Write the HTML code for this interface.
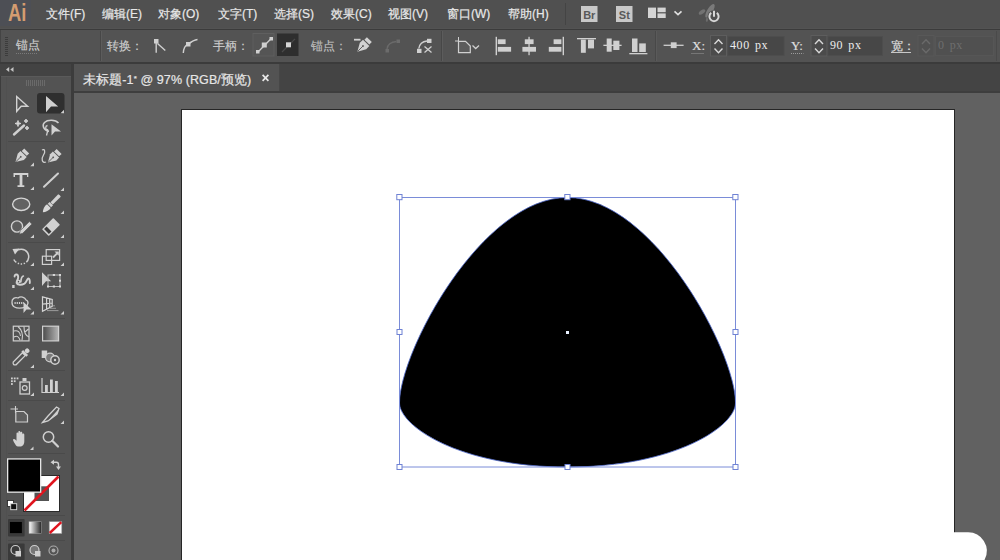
<!DOCTYPE html>
<html><head><meta charset="utf-8">
<style>
*{margin:0;padding:0;box-sizing:border-box}
html,body{width:1000px;height:560px;overflow:hidden;background:#535353;font-family:"Liberation Sans",sans-serif;color:#e6e6e6}
.a{position:absolute}
#menubar{left:0;top:0;width:1000px;height:28px;background:#505050}
.mi{position:absolute;top:5px;font-size:12px;line-height:18px;color:#e8e8e8;white-space:nowrap;-webkit-text-stroke:0.2px #e8e8e8}
#ctrl{left:0;top:29px;width:1000px;height:35px;background:#535353;border-top:1px solid #3b3b3b;border-bottom:2px solid #3b3b3b}
.inp{position:absolute;font-family:"Liberation Serif",serif;font-size:12px;line-height:14px;color:#ececec;white-space:nowrap;letter-spacing:0.6px;word-spacing:1.5px}
.lbl{position:absolute;font-size:12px;line-height:14px;color:#cdcdcd;white-space:nowrap;-webkit-text-stroke:0.15px currentColor}
#toolhdr{left:0;top:64px;width:71px;height:12px;background:#434343}
#toolbody{left:0;top:76px;width:71px;height:484px;background:#535353;border-top:1px solid #5a5a5a}
#gap{left:71px;top:64px;width:3px;height:496px;background:#3c3c3c}
#tabstrip{left:74px;top:64px;width:926px;height:28px;background:#444444}
#tab{left:74px;top:64px;width:206px;height:27px;background:#535353;border-right:1px solid #474747}
#canvas{left:74px;top:91px;width:926px;height:469px;background:#616161;border-top:2px solid #3e3e3e}
#artboard{left:181px;top:109px;width:774px;height:460px;background:#fff;border:1px solid #262626}
</style></head><body>
<div id="menubar" class="a">
  <div class="a" style="left:0;top:0;width:31px;height:26px;background:#4d4f55"></div>
  <div class="a" style="left:7.5px;top:1px;font-size:23px;line-height:24px;color:#d49c70;font-weight:bold;letter-spacing:0px;transform:scaleX(0.8);transform-origin:0 0">Ai</div>
  <div class="mi" style="left:46px">文件(F)</div>
  <div class="mi" style="left:102px">编辑(E)</div>
  <div class="mi" style="left:158px">对象(O)</div>
  <div class="mi" style="left:218px">文字(T)</div>
  <div class="mi" style="left:274px">选择(S)</div>
  <div class="mi" style="left:331px">效果(C)</div>
  <div class="mi" style="left:388px">视图(V)</div>
  <div class="mi" style="left:447px">窗口(W)</div>
  <div class="mi" style="left:508px">帮助(H)</div>
  <div class="a" style="left:565px;top:3px;width:1px;height:22px;background:#444"></div>
  <svg class="a" style="left:560px;top:0" width="180" height="28" viewBox="560 0 180 28">
    <rect x="581" y="6" width="16.5" height="16" fill="#c8c8c8"/>
    <rect x="616" y="6" width="16.5" height="16" fill="#c8c8c8"/>
    <text x="589.3" y="18.6" font-family="Liberation Sans" font-weight="bold" font-size="11" fill="#595959" text-anchor="middle">Br</text>
    <text x="624.3" y="18.6" font-family="Liberation Sans" font-weight="bold" font-size="11" fill="#595959" text-anchor="middle">St</text>
    <rect x="648" y="7.6" width="8" height="10.4" fill="#d4d4d4"/>
    <rect x="657.5" y="7.6" width="8.2" height="4.6" fill="#d4d4d4"/>
    <rect x="657.5" y="13.4" width="8.2" height="4.6" fill="#d4d4d4"/>
    <path d="M674.5,11.3 L678,14.6 L681.5,11.3" fill="none" stroke="#e0e0e0" stroke-width="1.6"/>
    <ellipse cx="710" cy="10.8" rx="7.8" ry="2.7" transform="rotate(-58 710 10.8)" fill="#7a7a7a"/>
    <ellipse cx="702" cy="12" rx="3.8" ry="1.8" transform="rotate(-38 702 12)" fill="#727272"/>
    <ellipse cx="707" cy="19.5" rx="2.4" ry="1.1" transform="rotate(-80 707 19.5)" fill="#6c6c6c"/>
    <circle cx="714" cy="16.8" r="6.6" fill="#505050"/>
    <path d="M711.2,12.9 A4.6,4.6 0 1 0 716.8,12.9" fill="none" stroke="#d6d6d6" stroke-width="2"/>
    <path d="M714,10.8 V16.8" stroke="#d6d6d6" stroke-width="2"/>
  </svg>
</div>
<div id="ctrl" class="a"></div>
<svg class="a" style="left:0;top:0" width="1000" height="64" viewBox="0 0 1000 64">
<g stroke="#3c3c3c" stroke-width="1"><path d="M5,37.5 H8 M5,39.5 H8 M5,41.5 H8 M5,43.5 H8 M5,45.5 H8 M5,47.5 H8 M5,49.5 H8 M5,51.5 H8 M5,53.5 H8 M5,55.5 H8"/></g>
<path d="M0.5,30 V62" stroke="#444"/>
<path d="M16,53.5 H38" stroke="#7a7a7a" stroke-dasharray="1 1"/>
<path d="M100.5,31 V61" stroke="#474747"/><path d="M101.5,31 V61" stroke="#5c5c5c"/>
<path d="M441.5,31 V61" stroke="#474747"/><path d="M442.5,31 V61" stroke="#5c5c5c"/>
<path d="M655.5,31 V61" stroke="#484848"/><path d="M656.5,31 V61" stroke="#5a5a5a"/>
<!-- convert corner -->
<g fill="#d0d0d0" stroke="#d0d0d0">
<rect x="154" y="39" width="4.5" height="4.5" stroke="none"/>
<path d="M156.2,43 V52.8" stroke-width="1.4" fill="none"/>
<path d="M157.5,43.5 L165.3,50.5" stroke-width="1.4" fill="none"/>
</g>
<!-- convert smooth -->
<rect x="186" y="42" width="4.5" height="4.5" fill="#d0d0d0"/>
<path d="M183.3,53 C183.5,48.5 185,45.5 188,44.3 C191,42 193.5,40 197.5,39.5" fill="none" stroke="#d0d0d0" stroke-width="1.4"/>
<!-- handle btns -->
<rect x="253" y="33.5" width="21" height="22.5" fill="#555" stroke="#5f5f5f" stroke-width="1"/>
<path d="M258,52 L271,38.8" stroke="#d0d0d0" stroke-width="1.3"/>
<rect x="256" y="50" width="3.5" height="3.5" fill="#d0d0d0"/>
<rect x="269.5" y="37" width="3.5" height="3.5" fill="#d0d0d0"/>
<rect x="261.8" y="42.5" width="5" height="5" fill="#d0d0d0"/>
<rect x="277" y="33.5" width="21.5" height="22.5" fill="#2e2e2e"/>
<path d="M282,52 L295,38.8" stroke="#4a4a4a" stroke-width="1.2"/>
<rect x="286" y="42.3" width="5" height="5" fill="#d4d4d4"/>
<!-- pen minus -->
<rect x="354" y="38.8" width="6.5" height="1.8" fill="#d0d0d0"/>
<g transform="translate(363,46) rotate(45)">
<path d="M-3.5,-9 H3.5 V-5.5 H-3.5 Z" fill="#d2d2d2"/>
<path d="M-4.5,-4.5 H4.5 V0 L0,8 L-4.5,0 Z" fill="#d2d2d2"/>
<path d="M0,0 V7.5" stroke="#5a5a5a" stroke-width="0.9"/>
<circle cx="0" cy="0" r="0.9" fill="#5a5a5a"/>
</g>
<!-- dim curve -->
<rect x="385.5" y="49" width="3.5" height="3.5" fill="#6c6c6c"/>
<rect x="396.5" y="39.5" width="3.5" height="3.5" fill="#6c6c6c"/>
<path d="M387,49 C387.5,45 390.5,42 396.5,41.5" fill="none" stroke="#6a6a6a" stroke-width="1.3"/>
<!-- cut path -->
<rect x="417" y="48.8" width="4.5" height="4.2" fill="#d0d0d0"/>
<rect x="427" y="38.8" width="4.5" height="4.2" fill="#d0d0d0"/>
<path d="M418.8,48.5 C419.5,44 422.5,41.5 427,41" fill="none" stroke="#d0d0d0" stroke-width="1.4"/>
<path d="M424.5,46.5 L431.5,52.5 M424.5,52.5 L431.5,46.5" stroke="#d0d0d0" stroke-width="1.3"/>
<!-- transform -->
<path d="M458.5,37 V41 M455,41 H458.5" stroke="#cfcfcf" stroke-width="1"/>
<path d="M458.5,41.3 H465.5 L470.3,46 V52.6 H458.5 Z" fill="#5c5c5c" stroke="#d0d0d0" stroke-width="1.2"/>
<path d="M472.5,45.5 L475.7,48.5 L479,45.5" fill="none" stroke="#cfcfcf" stroke-width="1.3"/>
<!-- align -->
<g fill="#d0d0d0">
<rect x="495.6" y="36.8" width="1.4" height="18.4"/>
<rect x="497.8" y="39.3" width="7.8" height="4.8"/>
<rect x="497.8" y="46.9" width="13.3" height="4.8"/>
<rect x="528.4" y="36.8" width="1.3" height="18.4"/>
<rect x="524.8" y="39.3" width="8.8" height="4.8"/>
<rect x="522.4" y="46.9" width="13.6" height="4.8"/>
<rect x="562.6" y="36.8" width="1.4" height="18.4"/>
<rect x="553.6" y="39.3" width="7.8" height="4.8"/>
<rect x="548.8" y="46.9" width="12.6" height="4.8"/>
<rect x="577" y="38" width="19" height="1.3"/>
<rect x="580.9" y="39.6" width="4.9" height="13.2"/>
<rect x="588" y="39.6" width="6" height="8.8"/>
<rect x="603.4" y="44.7" width="18.2" height="1.3"/>
<rect x="606.7" y="38.5" width="5" height="13.2"/>
<rect x="613.3" y="40.7" width="6.1" height="9.3"/>
<rect x="629.3" y="53" width="18.1" height="1.3"/>
<rect x="632" y="38.5" width="5.5" height="13.5"/>
<rect x="639.2" y="43.4" width="6.6" height="8.6"/>
</g>
<!-- ref point -->
<path d="M663.6,45.3 H683.6" stroke="#cfcfcf" stroke-width="1.3"/>
<rect x="670.8" y="42.3" width="5.8" height="5.8" fill="#cfcfcf"/>
<!-- underlines for X Y W -->
<path d="M691.5,53.5 H704 M791,53.5 H803.5" stroke="#9a9a9a" stroke-dasharray="1 1"/>
<path d="M891,52.5 H911" stroke="#c8c8c8" stroke-width="1"/>
<!-- spinners -->
<rect x="710.5" y="35.5" width="16" height="20.5" fill="#4b4b4b" stroke="#5d5d5d" stroke-width="1"/>
<path d="M714.5,44 L718.5,39.8 L722.5,44 M714.5,48.5 L718.5,52.7 L722.5,48.5" fill="none" stroke="#d8d8d8" stroke-width="1.4"/>
<rect x="728" y="36.5" width="56" height="19" fill="#474747" stroke="#4d4d4d" stroke-width="1"/>
<rect x="811" y="35.5" width="16" height="20.5" fill="#4b4b4b" stroke="#5d5d5d" stroke-width="1"/>
<path d="M815,44 L819,39.8 L823,44 M815,48.5 L819,52.7 L823,48.5" fill="none" stroke="#d8d8d8" stroke-width="1.4"/>
<rect x="828" y="36.5" width="54.5" height="19" fill="#474747" stroke="#4d4d4d" stroke-width="1"/>
<rect x="918" y="35.5" width="16" height="20.5" fill="#515151" stroke="#585858" stroke-width="1"/>
<path d="M922,44 L926,39.8 L930,44 M922,48.5 L926,52.7 L930,48.5" fill="none" stroke="#6a6a6a" stroke-width="1.4"/>
<rect x="935.5" y="36.5" width="58" height="19" fill="#505050" stroke="#565656" stroke-width="1"/>
<path d="M996.5,31 V61" stroke="#4a4a4a"/>
</svg>

<div class="a" style="left:0;top:0;width:1000px;height:64px">
  <div class="lbl" style="left:16px;top:38px">锚点</div>
  <div class="lbl" style="left:107px;top:39px">转换：</div>
  <div class="lbl" style="left:213px;top:39px">手柄：</div>
  <div class="lbl" style="left:311px;top:39px;color:#bebebe">锚点：</div>
  <div class="lbl" style="left:692px;top:39px;font-family:'Liberation Serif',serif;font-size:13px;color:#e0e0e0">X:</div>
  <div class="lbl" style="left:791px;top:39px;font-family:'Liberation Serif',serif;font-size:13px;color:#e0e0e0">Y:</div>
  <div class="lbl" style="left:891px;top:39px;color:#e0e0e0">宽：</div>
  <div class="inp" style="left:730px;top:38px">400 px</div>
  <div class="inp" style="left:830px;top:38px">90 px</div>
  <div class="inp" style="left:938px;top:38px;color:#6e6e6e">0 px</div>
</div>
<div id="toolhdr" class="a"></div>
<div id="toolbody" class="a"></div>
<div id="gap" class="a"></div>
<div id="tabstrip" class="a"></div>
<div id="tab" class="a">
  <div class="a" style="left:9px;top:8px;font-size:12.5px;line-height:14px;color:#e6e6e6;white-space:nowrap;letter-spacing:0.1px;-webkit-text-stroke:0.2px #e6e6e6">未标题-1<span style="font-size:8px;vertical-align:3px">*</span> @ 97% (RGB/预览)</div>
  <svg class="a" style="left:185px;top:7px" width="14" height="14" viewBox="0 0 14 14"><path d="M3.6,3.8 L9.4,9.8 M9.4,3.8 L3.6,9.8" stroke="#e8e8e8" stroke-width="1.7"/></svg>
</div>
<svg class="a" style="left:0;top:0" width="71" height="560" viewBox="0 0 71 560">
<g fill="none" stroke-width="1"><path d="M0.5,76 V560" stroke="#3d3d3d"/><path d="M6.5,77 V560" stroke="#505050"/></g>
<path d="M6,69.5 L9.2,67 V72 Z M10.3,69.5 L13.5,67 V72 Z" fill="#c4c4c4"/>
<g stroke="#6a6a6a" stroke-width="1"><path d="M26.5,80 V86 M28.5,80 V86 M30.5,80 V86 M32.5,80 V86 M34.5,80 V86 M36.5,80 V86 M38.5,80 V86 M40.5,80 V86 M42.5,80 V86 M44.5,80 V86"/></g>
<g stroke="#4a4a4a" stroke-width="1"><path d="M8,141.5 H65 M8,242.5 H65 M8,318.5 H65 M8,370.5 H65 M8,400.5 H65 M8,453.5 H65 M8,515.5 H65 M8,540.5 H65"/></g>
<!-- row1 -->
<path d="M16.7,96.5 V111.3 L21.2,106.2 H27.6 Z" fill="none" stroke="#d2d2d2" stroke-width="1.4" stroke-linejoin="miter"/>
<rect x="37" y="93" width="27.5" height="20.5" rx="3" fill="#2f2f2f"/>
<path d="M46,96 V112.2 L51,106.6 H58.2 Z" fill="#cfcfcf"/>
<g fill="#cfcfcf"><path d="M60.5,113.3 H64 V109.8 Z"/></g>
<!-- row2 magic wand -->
<path d="M14,134.5 L24,125.5" stroke="#d0d0d0" stroke-width="2.4" stroke-linecap="round"/>
<path d="M18,120.5 Q18,123.5 21,123.5 Q18,123.5 18,126.5 Q18,123.5 15,123.5 Q18,123.5 18,120.5Z M26,119 Q26,121 28,121 Q26,121 26,123 Q26,121 24,121 Q26,121 26,119Z M27,126 Q27,128 29,128 Q27,128 27,130 Q27,128 25,128 Q27,128 27,126Z" fill="#d8d8d8" stroke="#d8d8d8" stroke-width="0.9" stroke-linejoin="round"/>
<!-- lasso -->
<path d="M49,131.5 C43,130 42,125 44.5,122.5 C47.5,119.5 55.5,119.5 58.5,123" fill="none" stroke="#cfcfcf" stroke-width="1.5"/>
<path d="M47.5,125.5 C45,126 45,130 48,129.5 M48,129.5 L46.5,135.5" fill="none" stroke="#cfcfcf" stroke-width="1.3"/>
<path d="M51.5,124.3 V135.6 L55,131.6 H61 Z" fill="#d2d2d2"/>
<!-- row3 pen -->
<g transform="translate(20.8,156.8) rotate(45) scale(0.88)">
<path d="M-4,-9.5 H4 V-5.5 H-4 Z" fill="#d2d2d2"/>
<path d="M-5,-4.5 H5 V0 L0,8.5 L-5,0 Z" fill="#d2d2d2"/>
<path d="M0,0 V8" stroke="#5a5a5a" stroke-width="1"/>
<circle cx="0" cy="0" r="1" fill="#5a5a5a"/>
</g>
<path d="M30.3,166.3 H34 V162.6 Z" fill="#cfcfcf"/>
<g transform="translate(53.2,157.3) rotate(45) scale(0.88)">
<path d="M-4,-9.5 H4 V-5.5 H-4 Z" fill="#d2d2d2"/>
<path d="M-5,-4.5 H5 V0 L0,8.5 L-5,0 Z" fill="#d2d2d2"/>
<path d="M0,0 V8" stroke="#5a5a5a" stroke-width="1"/>
<circle cx="0" cy="0" r="1" fill="#5a5a5a"/>
</g>
<path d="M42,150 C45,148.5 45.5,152 43.5,155 C41,159 42,163.5 46,162" fill="none" stroke="#cfcfcf" stroke-width="1.3"/>
<!-- row4 T -->
<path d="M13.5,173 H28.3 V177 H27 V175 H22.4 V185.3 H24.3 V187 H17.5 V185.3 H19.6 V175 H15 V177 H13.5 Z" fill="#d2d2d2"/>
<path d="M30.3,190 H34 V186.5 Z" fill="#cfcfcf"/>
<path d="M44,186.8 L58,173.5" stroke="#cfcfcf" stroke-width="2" stroke-linecap="round"/>
<path d="M60.5,191 H64 V187.5 Z" fill="#cfcfcf"/>
<!-- row5 ellipse -->
<ellipse cx="21.2" cy="204.3" rx="8.6" ry="6.2" fill="#626262" stroke="#d4d4d4" stroke-width="1.4"/>
<path d="M30.3,214 H34 V210.5 Z" fill="#cfcfcf"/>
<g transform="translate(51,204) rotate(45)">
<path d="M-1.8,-12 Q0,-13 1.8,-12 L1.6,-1 H-1.6 Z" fill="#d2d2d2"/>
<path d="M-2.4,-0.5 H2.4 V2.2 H-2.4 Z" fill="#d2d2d2"/>
<path d="M-2.6,3 C-3.4,6 -2,9.5 0,11.5 C2,9.5 3.4,6 2.6,3 Z" fill="#d8d8d8"/>
</g>
<path d="M60.5,214 H64 V210.5 Z" fill="#cfcfcf"/>
<!-- row6 shaper/blob -->
<circle cx="17" cy="226.5" r="5.6" fill="#5d5d5d" stroke="#d0d0d0" stroke-width="1.4"/>
<g transform="translate(25,228.5) rotate(45)">
<path d="M-1.8,-8 H1.8 V5 L0,8 L-1.8,5 Z" fill="#d2d2d2" stroke="#535353" stroke-width="0.6"/>
</g>
<path d="M30.3,238 H34 V234.5 Z" fill="#cfcfcf"/>
<g transform="translate(51,227) rotate(45)">
<rect x="-4.8" y="-8" width="9.6" height="16" rx="0.8" fill="#d2d2d2"/>
<rect x="-3.4" y="2.8" width="6.8" height="3.6" fill="#3d3d3d"/>
</g>
<path d="M60.5,238 H64 V234.5 Z" fill="#cfcfcf"/>
<!-- row7 rotate -->
<path d="M15.5,251.5 C18.5,248.5 24.5,248.3 27.5,252.5 C30,256.5 28.5,262 24,263.5 C20,264.8 15.5,263 13.8,259.5" fill="none" stroke="#cfcfcf" stroke-width="1.5" stroke-dasharray="24 1.6 1.4 1.6 1.4 1.6 1.4 1.6"/>
<path d="M12.5,249 L19.5,248.5 L15,254.5 Z" fill="#d2d2d2"/>
<path d="M30.3,266 H34 V262.5 Z" fill="#cfcfcf"/>
<rect x="46.2" y="249.6" width="13.4" height="10.8" fill="none" stroke="#d0d0d0" stroke-width="1.2"/>
<rect x="42.4" y="256.2" width="9.2" height="8.2" fill="none" stroke="#d0d0d0" stroke-width="1.2"/>
<path d="M53,257.5 L57.5,253" fill="none" stroke="#cfcfcf" stroke-width="1.8"/><path d="M54.5,251.5 H58.8 V255.8 Z" fill="#cfcfcf"/>
<path d="M60.5,266 H64 V262.5 Z" fill="#cfcfcf"/>
<!-- row8 warp -->
<path d="M14.6,276.5 C14.6,273.5 18.2,273.8 18.2,277.2 C18.2,279.5 16.3,281 16.6,283 C17.2,285.2 21.5,285.3 24.5,283.6 C26.5,282.4 27,279 28,278.6 C29.5,278 30,281 29.8,283" fill="none" stroke="#d0d0d0" stroke-width="1.9" stroke-linecap="round"/>
<path d="M20.8,282 C21,279.5 21.8,276.5 23.3,276" fill="none" stroke="#d0d0d0" stroke-width="1.7" stroke-linecap="round"/>
<circle cx="18.3" cy="281.6" r="1.5" fill="none" stroke="#d0d0d0" stroke-width="1.2"/>
<rect x="12.2" y="285" width="2.4" height="3" fill="#d0d0d0"/>
<path d="M30.3,290 H34 V286.5 Z" fill="#cfcfcf"/>
<path d="M42,272.3 V286 L46,281.3 H51.2 Z" fill="#d0d0d0"/>
<rect x="48" y="275" width="12" height="11.5" fill="none" stroke="#bdbdbd" stroke-width="1"/><g fill="#d8d8d8"><rect x="52.8" y="274" width="2.2" height="2"/><rect x="59" y="274" width="2" height="2"/><rect x="59" y="279.7" width="2" height="2"/><rect x="59" y="285.5" width="2" height="2"/><rect x="52.8" y="285.5" width="2.2" height="2"/><rect x="47" y="285.5" width="2" height="2"/></g>
<!-- row9 shape builder -->
<path d="M12,302.5 C11.5,298.5 15,297 18,298 C20.5,296 25,297 26,300 C29,301 28.5,305.5 25,307 C22,308.5 17,308.5 14.5,307 C12.5,306 12,304.5 12,302.5 Z" fill="none" stroke="#cfcfcf" stroke-width="1.3"/>
<path d="M14.5,303 H24" stroke="#cfcfcf" stroke-width="2" stroke-dasharray="1.2 1"/>
<path d="M23.5,302 V313 L26.5,309.5 H31.5 Z" fill="#d2d2d2"/>
<path d="M30.3,314.5 H34 V311 Z" fill="#cfcfcf"/>
<path d="M42.5,296.8 L52.2,299.5 V306.3 L42.5,311.2 Z M42.5,304.2 L52.2,303 M46.6,298 V309.2 M49.7,298.8 V307.8" fill="none" stroke="#d4d4d4" stroke-width="1.2"/>
<path d="M47,310.6 H58.5 M50,308.3 H56 M53,305.8 H55" fill="none" stroke="#9a9a9a" stroke-width="1"/>
<path d="M60.5,314.5 H64 V311 Z" fill="#cfcfcf"/>
<!-- row10 mesh -->
<rect x="13.3" y="326.2" width="15.7" height="14.7" fill="none" stroke="#d0d0d0" stroke-width="1.2"/>
<path d="M14,331 C18,330 20,332 20.5,336 M14,337 C17,335 19,337 20,340 M18,326.5 C22,330 23.5,334 22,340.5 M24,326.5 C24,332 26,336 29,337 M25,332 L28.5,329" fill="none" stroke="#d0d0d0" stroke-width="1.1"/>
<defs><linearGradient id="gr" x1="0" y1="0" x2="1" y2="0"><stop offset="0" stop-color="#4a4a4a"/><stop offset="1" stop-color="#b5b5b5"/></linearGradient>
<linearGradient id="gr2" x1="0" y1="0" x2="1" y2="0"><stop offset="0" stop-color="#ffffff"/><stop offset="1" stop-color="#222"/></linearGradient></defs>
<rect x="42.6" y="326.2" width="16" height="14.7" fill="url(#gr)" stroke="#d0d0d0" stroke-width="1.2"/>
<!-- row11 eyedropper -->
<g transform="translate(21,357) rotate(45)">
<path d="M-2,-4 H2 V9 Q0,12 -2,9 Z" fill="none" stroke="#d0d0d0" stroke-width="1.3"/>
<rect x="-3.5" y="-6.5" width="7" height="2.5" fill="#d2d2d2"/>
<rect x="-2.3" y="-11" width="4.6" height="4.5" rx="2" fill="#d2d2d2"/>
</g>
<path d="M30.3,368 H34 V364.5 Z" fill="#cfcfcf"/>
<rect x="41.7" y="350.5" width="5.5" height="7.5" fill="#d0d0d0"/>
<circle cx="50" cy="357.5" r="4.4" fill="#7a7a7a" stroke="#d0d0d0" stroke-width="1.2"/>
<circle cx="55" cy="360" r="4.2" fill="#535353" stroke="#d0d0d0" stroke-width="1.4"/>
<circle cx="55" cy="360" r="1.2" fill="#d0d0d0"/>
<!-- row12 symbol sprayer -->
<g fill="#cfcfcf"><rect x="11" y="377.5" width="1.8" height="1.8"/><rect x="13.8" y="377.5" width="1.8" height="1.8"/><rect x="16.6" y="377.5" width="1.8" height="1.8"/><rect x="11" y="380.3" width="1.8" height="1.8"/><rect x="13.8" y="380.3" width="1.8" height="1.8"/><rect x="11" y="383.1" width="1.8" height="1.8"/></g>
<rect x="22.5" y="378" width="4" height="3" fill="#d0d0d0"/>
<rect x="20" y="382" width="9.5" height="12" fill="none" stroke="#d0d0d0" stroke-width="1.3"/>
<circle cx="24.7" cy="388" r="2.4" fill="none" stroke="#d0d0d0" stroke-width="1.2"/>
<path d="M30.3,396 H34 V392.5 Z" fill="#cfcfcf"/>
<path d="M42,378 V392.5 H59" fill="none" stroke="#d0d0d0" stroke-width="1.2"/>
<rect x="45" y="385" width="2.8" height="7" fill="#d0d0d0"/><rect x="50" y="379.5" width="2.8" height="12.5" fill="#d0d0d0"/><rect x="55" y="381" width="2.8" height="11" fill="#d0d0d0"/>
<path d="M60.5,396 H64 V392.5 Z" fill="#cfcfcf"/>
<!-- row13 artboard -->
<path d="M10.5,409 H18 M15.5,406 V413" stroke="#d0d0d0" stroke-width="1.1"/>
<path d="M15.8,411.5 H24 L27.5,415 V422 H15.8 Z" fill="#5f5f5f" stroke="#d0d0d0" stroke-width="1.2"/>
<path d="M42.5,422.5 L48,416 L56.5,407 L59,408.5 L57,414 L48,421 Z" fill="none" stroke="#d0d0d0" stroke-width="1.3"/>
<path d="M48,421 L57,414 L59,408.5 Z" fill="#d0d0d0"/>
<path d="M60.5,424 H64 V420.5 Z" fill="#cfcfcf"/>
<!-- row14 hand -->
<path d="M16,445.5 C14.5,443 12.5,440.5 13.3,439.3 C14.2,438.3 15.5,439.5 16.5,440.8 V433.5 C16.5,432 18.2,432 18.3,433.5 V438 V432 C18.3,430.5 20.2,430.5 20.3,432 V438 V432.8 C20.3,431.3 22.2,431.3 22.3,432.8 V438.5 V434.5 C22.3,433 24.2,433 24.3,434.5 V441.5 C24.3,444.5 22.5,446.6 20,446.6 H18 C17.2,446.6 16.5,446.2 16,445.5 Z" fill="#d2d2d2"/>
<path d="M30,450 H33.5 V446.5 Z" fill="#cfcfcf"/>
<circle cx="48.5" cy="437" r="5.2" fill="none" stroke="#d0d0d0" stroke-width="1.5"/>
<path d="M52.3,440.8 L58,446.5" stroke="#d0d0d0" stroke-width="2.2" stroke-linecap="round"/>
<!-- fill/stroke -->
<rect x="23.5" y="475.5" width="36" height="36" fill="#ffffff" stroke="#2a2a2a" stroke-width="1"/>
<rect x="34.5" y="486.3" width="14.5" height="14.7" fill="#535353"/>
<path d="M24.5,510.5 L58.5,476.5" stroke="#e0141e" stroke-width="2.6"/>
<rect x="7" y="458.3" width="34.3" height="34.5" fill="#e6e6e6"/>
<rect x="8.3" y="459.6" width="31.7" height="31.9" fill="#000"/>
<path d="M53.5,462.3 H56.5 Q58.5,462.3 58.5,464.5 V467" fill="none" stroke="#d0d0d0" stroke-width="1.4"/><path d="M50.5,462.3 L54,459.8 V464.8 Z M56,466.5 H61 L58.5,470 Z" fill="#d0d0d0"/>
<rect x="7.5" y="500.5" width="6" height="6" fill="#fff" stroke="#222" stroke-width="0.8"/>
<rect x="10.7" y="503.7" width="6" height="6" fill="#111" stroke="#ddd" stroke-width="0.9"/>
<rect x="8" y="519" width="16.6" height="17.5" rx="1" fill="#3a3a3a"/>
<rect x="9.6" y="521.7" width="12.6" height="11.8" fill="#000" stroke="#444" stroke-width="0.6"/>
<rect x="29" y="521.7" width="12.6" height="11.8" fill="url(#gr2)" stroke="#999" stroke-width="0.6"/>
<rect x="49.2" y="521.7" width="12.6" height="11.8" fill="#fff" stroke="#999" stroke-width="0.6"/>
<path d="M49.7,533 L61.3,522.2" stroke="#e0141e" stroke-width="2.4"/>
<rect x="8" y="543.5" width="16.6" height="17" rx="1" fill="#3a3a3a"/>
<circle cx="15.5" cy="550" r="4.5" fill="none" stroke="#cfcfcf" stroke-width="1.2"/>
<rect x="15.5" y="551" width="5.5" height="5.5" fill="#cfcfcf"/>
<circle cx="34.5" cy="550" r="4.5" fill="#777" stroke="#cfcfcf" stroke-width="1.2"/>
<rect x="35" y="551" width="5.5" height="5.5" fill="#cfcfcf"/>
<circle cx="53.5" cy="550.5" r="4.5" fill="none" stroke="#aaa" stroke-width="1.2"/>
<circle cx="53.5" cy="550.5" r="2" fill="#aaa"/>
</svg>

<div id="canvas" class="a"></div>
<div id="artboard" class="a"></div>
<svg class="a" style="left:0;top:0" width="1000" height="560">
  <path d="M567.5,197.5 C481.43,197.5 399.5,352.18 399.5,402.87 C399.5,426.17 459.45,467 567.5,467 C675.55,467 735.5,426.17 735.5,402.87 C735.5,352.18 653.57,197.5 567.5,197.5 Z" fill="#000" stroke="#4a64c8" stroke-width="0.8"/>
  <rect x="399.5" y="197.5" width="336" height="269.5" fill="none" stroke="#7a8cd8" stroke-width="1"/>
  <g fill="#fff" stroke="#6f82d4" stroke-width="1">
    <rect x="396.8" y="194.5" width="5.2" height="5.2"/><rect x="564.8" y="194.5" width="5.2" height="5.2"/><rect x="732.8" y="194.5" width="5.2" height="5.2"/>
    <rect x="397" y="329.5" width="5" height="5"/><rect x="733" y="329.5" width="5" height="5"/>
    <rect x="397" y="464.5" width="5" height="5"/><rect x="565" y="464.5" width="5" height="5"/><rect x="733" y="464.5" width="5" height="5"/>
  </g>
  <rect x="566" y="331" width="3" height="3" fill="#e8f0ff"/>
  <path d="M954,532.3 H967 A18.8,18.8 0 0 1 984.5,560 H954 Z" fill="#fff"/>
</svg>
</body></html>
